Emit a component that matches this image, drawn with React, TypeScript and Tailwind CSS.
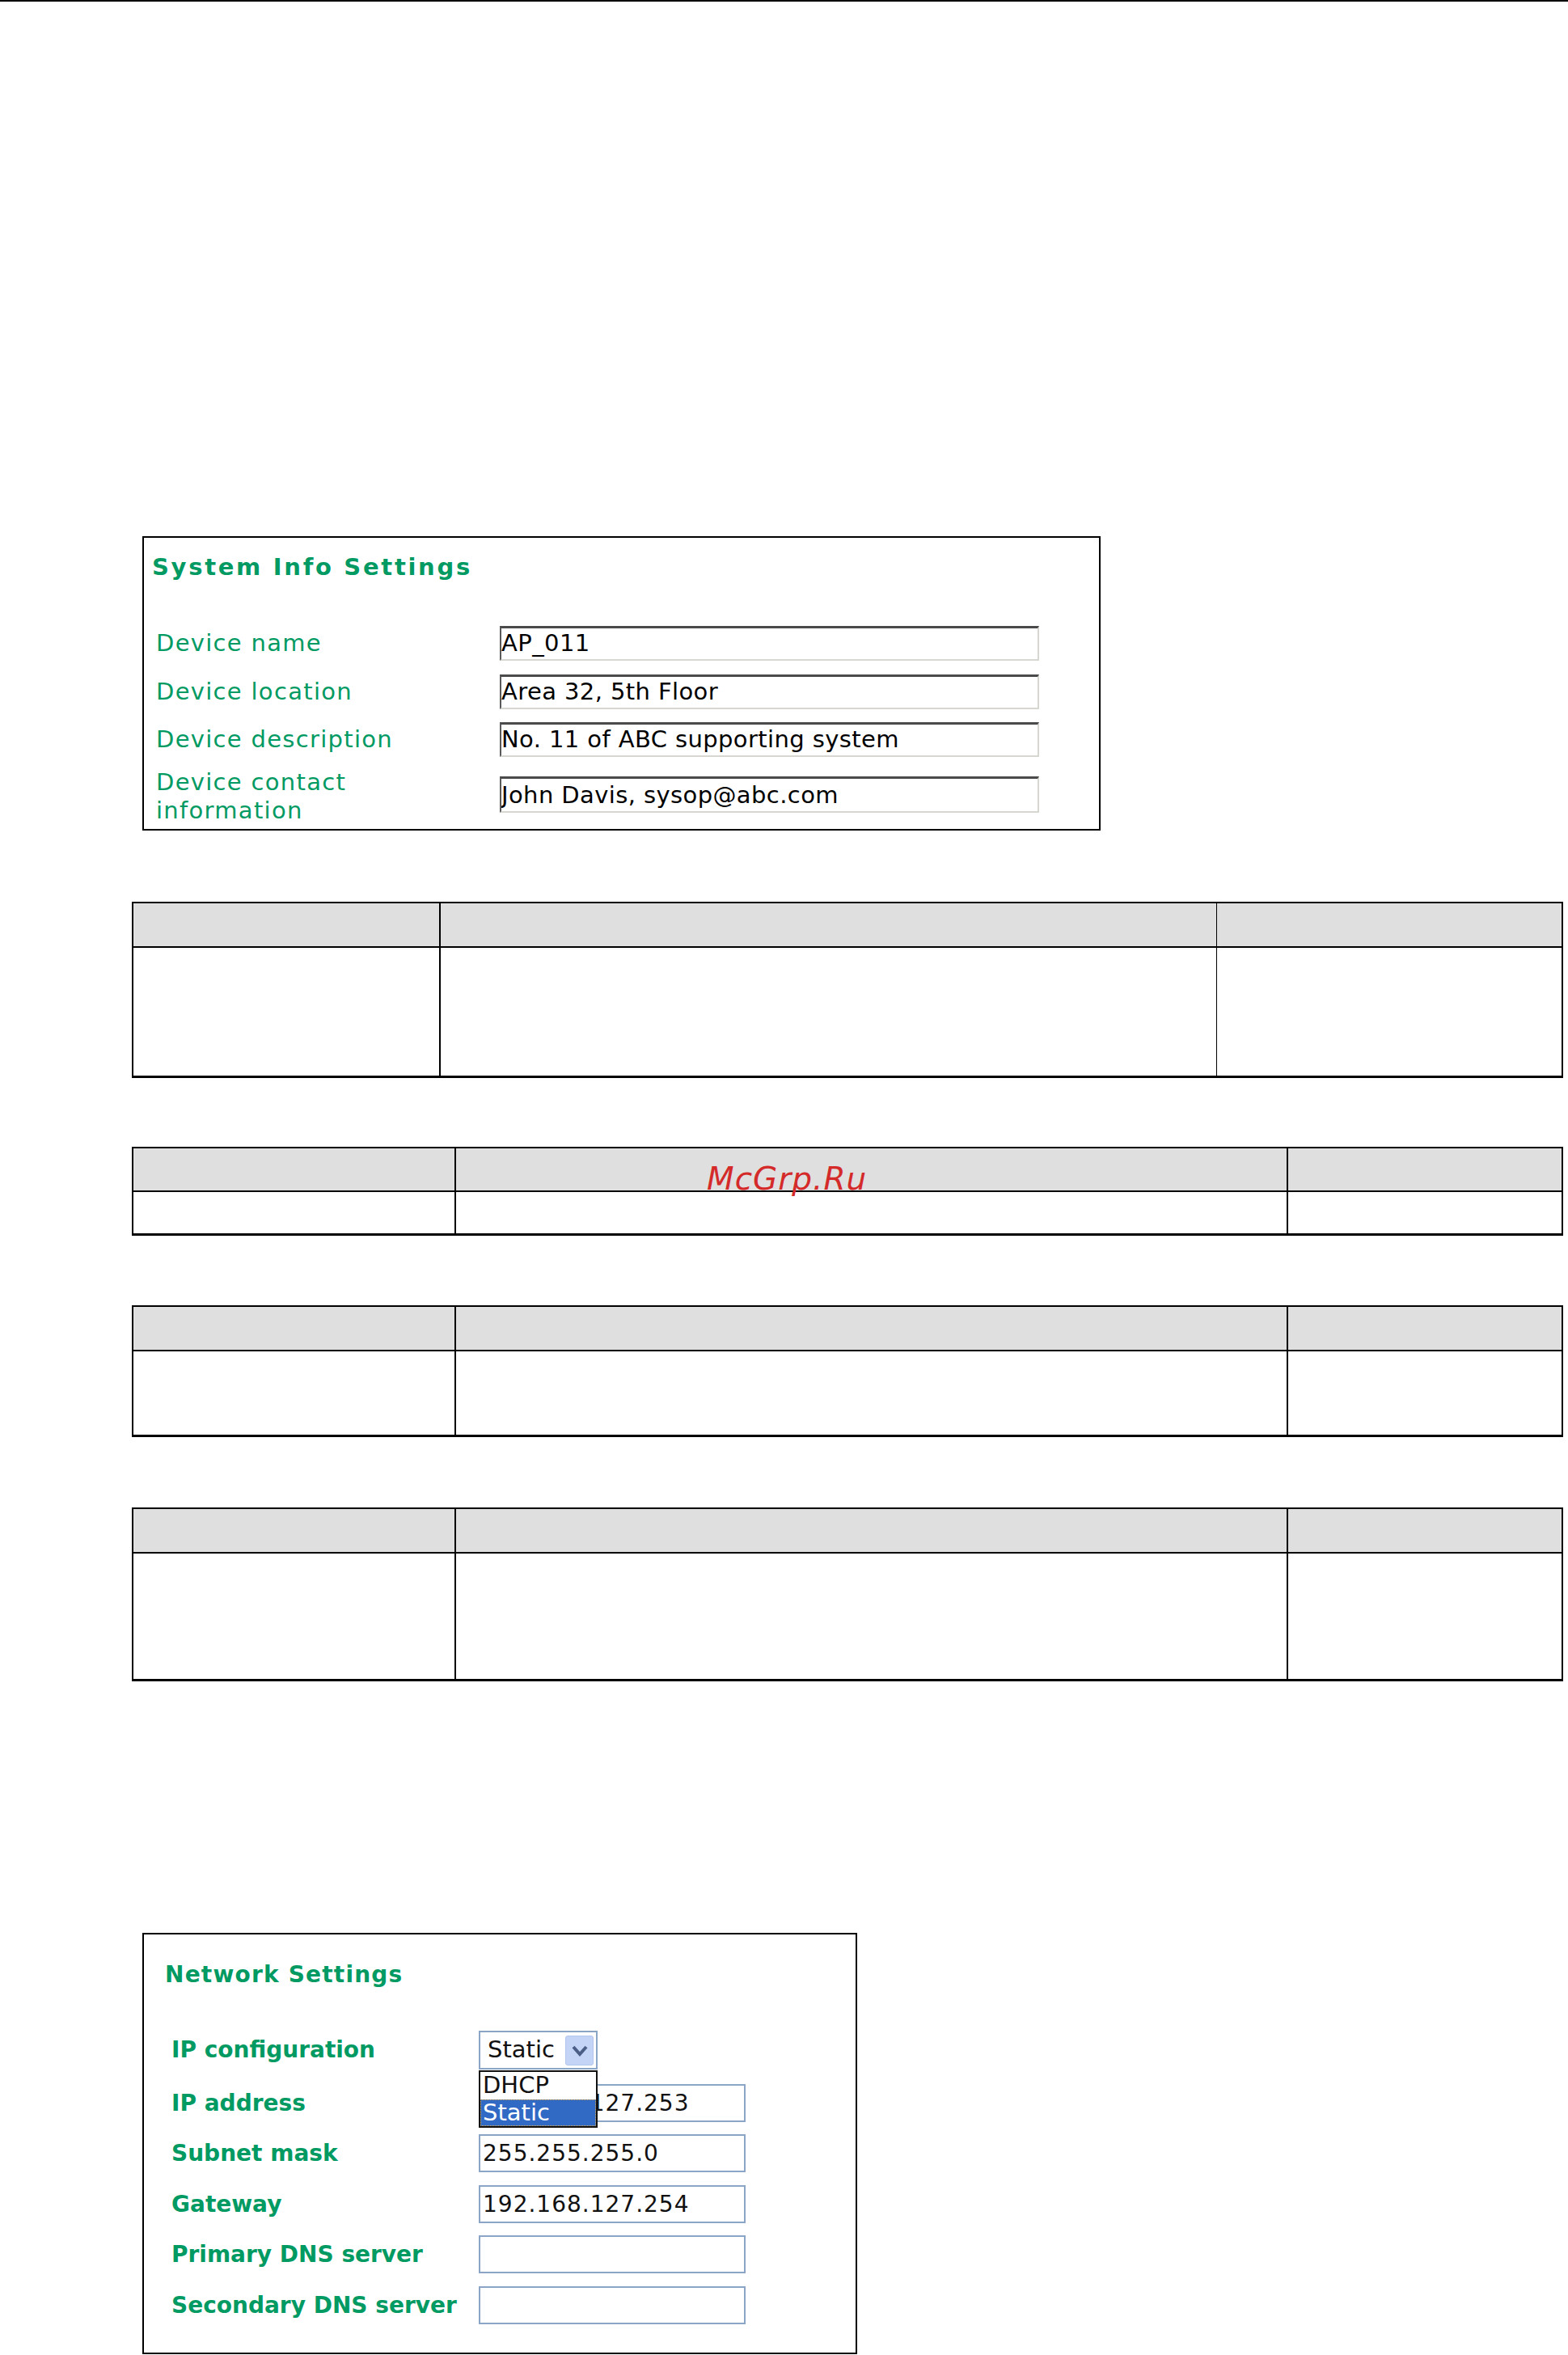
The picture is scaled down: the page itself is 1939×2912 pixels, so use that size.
import React from "react";

const green = "text-[#009a62]";

function SysRow({ label, value, mt }: { label: React.ReactNode; value: string; mt: string }) {
  return (
    <div className={`flex items-center ${mt}`}>
      <div className={`w-[440px] pl-[15px] text-[29px] leading-[35px] tracking-[1.3px] ${green}`}>{label}</div>
      <input
        readOnly
        value={value}
        className="w-[667px] h-[43px] border-t-[3px] border-l-2 border-b-2 border-r-2 border-t-[#4a4a4a] border-l-[#5a5a5a] border-b-[#d8d6d0] border-r-[#d8d6d0] bg-white pl-0 text-[29px] tracking-[0.4px] text-black outline-none"
      />
    </div>
  );
}

function NetRow({ label, value, mt }: { label: string; value: string; mt: string }) {
  return (
    <div className={`flex items-center ${mt}`}>
      <div className={`w-[414px] pl-[34px] text-[28px] font-bold whitespace-nowrap ${green}`}>{label}</div>
      <input
        readOnly
        value={value}
        className="w-[330px] h-[47px] border-2 border-[#8aa5c6] bg-white pl-[3px] text-[28px] tracking-[1px] text-[#111] outline-none"
      />
    </div>
  );
}

export default function App() {
  return (
    <div className="relative w-[1939px] h-[2912px] overflow-hidden bg-white font-['DejaVu_Sans',sans-serif]">
      <div className="h-[2px] bg-black" />

      {/* System Info Settings panel */}
      <div className="ml-[176px] mt-[661px] w-[1185px] h-[364px] border-2 border-black">
        <div className={`mt-[18px] h-[37px] leading-[37px] pl-[10px] text-[29px] font-bold tracking-[2.7px] ${green}`}>
          System Info Settings
        </div>
        <div className="mt-[54px]">
          <SysRow mt="" label="Device name" value="AP_011" />
          <SysRow mt="mt-[17px]" label="Device location" value="Area 32, 5th Floor" />
          <SysRow mt="mt-[16px]" label="Device description" value="No. 11 of ABC supporting system" />
          <div className="flex items-start mt-[14px]">
            <div className={`w-[440px] pl-[15px] text-[29px] leading-[35px] tracking-[1.3px] ${green}`}>
              Device contact
              <br />
              information
            </div>
            <input
              readOnly
              value="John Davis, sysop@abc.com"
              className="mt-[10px] w-[667px] h-[45px] border-t-[3px] border-l-2 border-b-2 border-r-2 border-t-[#4a4a4a] border-l-[#5a5a5a] border-b-[#d8d6d0] border-r-[#d8d6d0] bg-white pl-0 text-[29px] tracking-[0.4px] text-black outline-none"
            />
          </div>
        </div>
      </div>

      {/* Table 1 */}
      <div className="mt-[88px] ml-[163px] w-[1770px] border-x-2 border-t-2 border-b-[3px] border-black">
        <div className="flex h-[55px] bg-[#dfdfdf] border-b-2 border-black">
          <div className="w-[380px] border-r-2 border-black" />
          <div className="w-[960px] border-r border-black" />
          <div className="flex-1" />
        </div>
        <div className="flex h-[158px]">
          <div className="w-[380px] border-r-2 border-black" />
          <div className="w-[960px] border-r border-black" />
          <div className="flex-1" />
        </div>
      </div>

      {/* Table 2 */}
      <div className="mt-[85px] ml-[163px] w-[1770px] border-x-2 border-t-2 border-b-[3px] border-black">
        <div className="flex h-[54px] bg-[#dfdfdf] border-b-2 border-black">
          <div className="w-[399px] border-r-2 border-black" />
          <div className="w-[1029px] border-r-2 border-black" />
          <div className="flex-1" />
        </div>
        <div className="flex h-[51px]">
          <div className="w-[399px] border-r-2 border-black" />
          <div className="w-[1029px] border-r-2 border-black" />
          <div className="flex-1" />
        </div>
      </div>

      {/* Table 3 */}
      <div className="mt-[86px] ml-[163px] w-[1770px] border-x-2 border-t-2 border-b-[3px] border-black">
        <div className="flex h-[55px] bg-[#dfdfdf] border-b-2 border-black">
          <div className="w-[399px] border-r-2 border-black" />
          <div className="w-[1029px] border-r-2 border-black" />
          <div className="flex-1" />
        </div>
        <div className="flex h-[103px]">
          <div className="w-[399px] border-r-2 border-black" />
          <div className="w-[1029px] border-r-2 border-black" />
          <div className="flex-1" />
        </div>
      </div>

      {/* Table 4 */}
      <div className="mt-[87px] ml-[163px] w-[1770px] border-x-2 border-t-2 border-b-[3px] border-black">
        <div className="flex h-[55px] bg-[#dfdfdf] border-b-2 border-black">
          <div className="w-[399px] border-r-2 border-black" />
          <div className="w-[1029px] border-r-2 border-black" />
          <div className="flex-1" />
        </div>
        <div className="flex h-[155px]">
          <div className="w-[399px] border-r-2 border-black" />
          <div className="w-[1029px] border-r-2 border-black" />
          <div className="flex-1" />
        </div>
      </div>

      {/* Network Settings panel */}
      <div className="mt-[311px] ml-[176px] w-[884px] h-[521px] border-2 border-black">
        <div className={`mt-[32px] h-[36px] leading-[36px] pl-[26px] text-[28px] font-bold tracking-[1.2px] ${green}`}>
          Network Settings
        </div>
        <div className="mt-[51px] flex items-center h-[48px]">
          <div className={`w-[414px] pl-[34px] text-[28px] font-bold whitespace-nowrap ${green}`}>IP configuration</div>
          <div className="relative w-[147px] h-[48px] border-2 border-[#8aa5c6] bg-white flex items-center pl-[9px] text-[29px] text-[#111]">
            Static
            <div className="absolute right-[3px] top-[4px] bottom-[3px] w-[35px] rounded-[3px] bg-[#c4d4f6] border border-[#b3c6ee] flex items-center justify-center">
              <svg width="22" height="16" viewBox="0 0 22 16">
                <polyline points="3,3 11,12 19,3" fill="none" stroke="#4b5f86" strokeWidth="4" strokeLinejoin="miter" />
              </svg>
            </div>
            <div className="absolute left-[-2px] top-[47px] z-10 w-[147px] h-[71px] border-2 border-[#111] bg-white flex flex-col">
              <div className="h-[34px] flex items-center pl-[3px] text-[29px] text-[#111]">DHCP</div>
              <div className="h-[33px] flex items-center pl-[2px] text-[29px] text-white bg-[#316ac5] border border-dotted border-[#e0ac45]">
                Static
              </div>
            </div>
          </div>
        </div>
        <NetRow mt="mt-[18px]" label="IP address" value="192.168.127.253" />
        <NetRow mt="mt-[15px]" label="Subnet mask" value="255.255.255.0" />
        <NetRow mt="mt-[16px]" label="Gateway" value="192.168.127.254" />
        <NetRow mt="mt-[15px]" label="Primary DNS server" value="" />
        <NetRow mt="mt-[16px]" label="Secondary DNS server" value="" />
      </div>

      {/* Watermark */}
      <div className="absolute left-[874px] top-[1438px] text-[39px] leading-none italic tracking-[1px] text-[#d42a2a]">
        McGrp.Ru
      </div>
    </div>
  );
}
